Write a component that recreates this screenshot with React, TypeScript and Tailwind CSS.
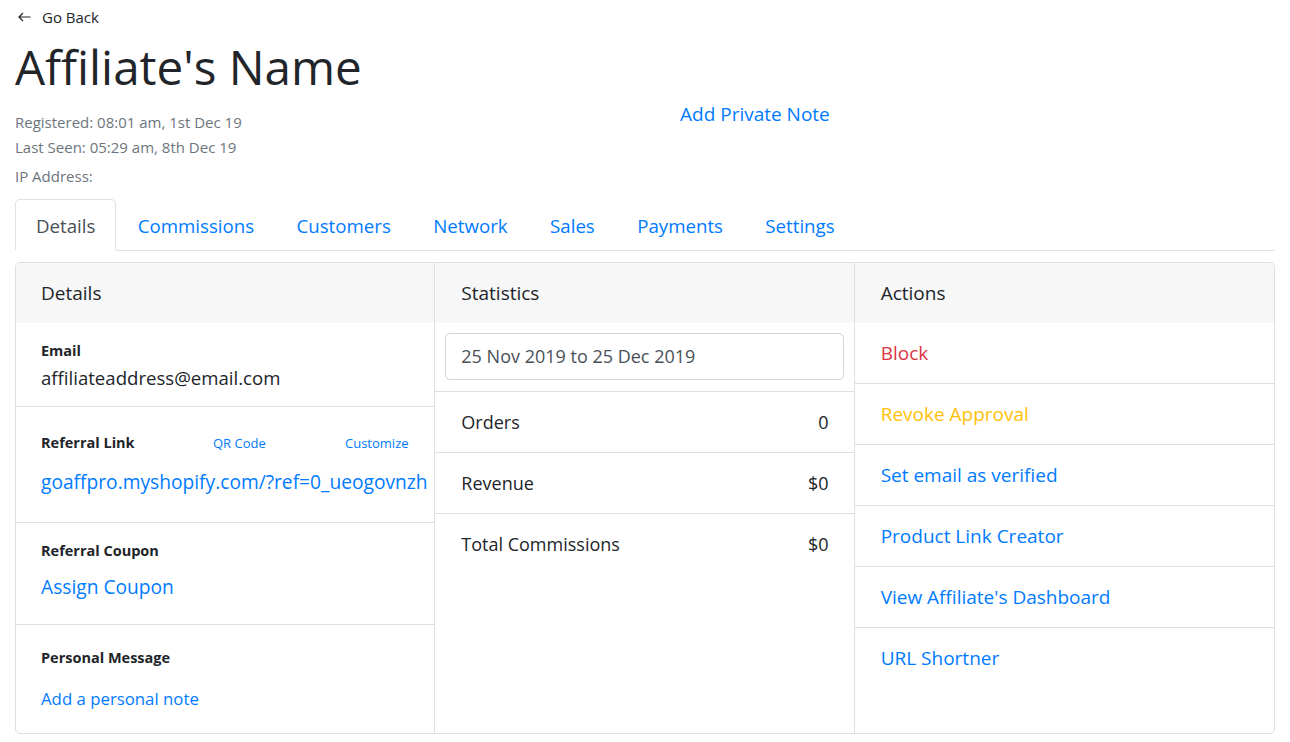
import React from "react";

const blue = "text-[#007bff]";

export default function App() {
  return (
    <div className="min-h-[742px] bg-white px-[15px] font-['Open_Sans',sans-serif] text-[#212529]">
      <div className="flex h-[34px] items-center pl-[3px] text-[15px]">
        <svg width="13" height="10" viewBox="0 0 13 10" className="mr-[11px]" fill="none" stroke="#212529" strokeWidth="1.2">
          <path d="M12.5 5H1M5 1 1 5l4 4" />
        </svg>
        <span>Go Back</span>
      </div>
      <h1 className="mt-[2px] h-[62px] text-[47.6px] leading-[62px] font-normal">Affiliate's Name</h1>
      <div className="flex">
        <div className="w-[665px] pt-[12px] text-[15px] text-[#6c757d]">
          <div className="h-[25px] leading-[25px]">Registered: 08:01 am, 1st Dec 19</div>
          <div className="h-[25px] leading-[25px]">Last Seen: 05:29 am, 8th Dec 19</div>
          <div className="mt-[4px] h-[25px] leading-[25px]">IP Address:</div>
        </div>
        <div className={`pt-[2px] text-[19px] ${blue}`}>Add Private Note</div>
      </div>
      <div className="mt-[10px] flex h-[52px] border-b border-[#dee2e6] text-[18.7px]">
        <div className="-mb-px flex h-[52px] items-center rounded-t-[5px] border border-b-white border-[#dee2e6] bg-white px-[20px] pt-[3px] text-[#495057]">
          Details
        </div>
        {["Commissions", "Customers", "Network", "Sales", "Payments", "Settings"].map((t) => (
          <div key={t} className={`flex items-center px-[21.2px] pt-[3px] ${blue}`}>
            {t}
          </div>
        ))}
      </div>
      <div className="mt-[11px] grid h-[472px] grid-cols-3 overflow-hidden rounded-[5px] border border-[#dfdfdf] text-[18px]">
        {/* Details */}
        <div className="flex flex-col border-r border-[#dfdfdf]">
          <div className="flex h-[60px] items-center bg-[#f7f7f7] px-[25px] text-[19px]">Details</div>
          <div className="h-[84px] border-b border-[#dfdfdf] px-[25px] pt-[18px]">
            <div className="text-[14.5px] font-bold leading-[20px]">Email</div>
            <div className="text-[18.6px] leading-[33px]">affiliateaddress@email.com</div>
          </div>
          <div className="h-[116px] border-b border-[#dfdfdf] px-[25px] pt-[26px]">
            <div className="flex items-center leading-[20px]">
              <div className="w-[172px] text-[14.5px] font-bold">Referral Link</div>
              <div className={`w-[132px] text-[13px] ${blue}`}>QR Code</div>
              <div className={`text-[13px] ${blue}`}>Customize</div>
            </div>
            <div className={`mt-[13px] whitespace-nowrap text-[19.2px] leading-[32px] ${blue}`}>
              goaffpro.myshopify.com/?ref=0_ueogovnzh
            </div>
          </div>
          <div className="h-[102px] border-b border-[#dfdfdf] px-[25px] pt-[18px]">
            <div className="text-[14.5px] font-bold leading-[20px]">Referral Coupon</div>
            <div className={`mt-[10px] text-[19.2px] leading-[32px] ${blue}`}>Assign Coupon</div>
          </div>
          <div className="flex-1 px-[25px] pt-[23px]">
            <div className="text-[14.5px] font-bold leading-[20px]">Personal Message</div>
            <div className={`mt-[16px] text-[16.8px] leading-[30px] ${blue}`}>Add a personal note</div>
          </div>
        </div>
        {/* Statistics */}
        <div className="flex flex-col border-r border-[#dfdfdf]">
          <div className="flex h-[60px] items-center bg-[#f7f7f7] px-[26px] text-[19px]">Statistics</div>
          <div className="h-[69px] border-b border-[#dfdfdf] px-[10px] pt-[10px]">
            <div className="flex h-[47px] items-center rounded-[5px] border border-[#ced4da] px-[15px] text-[18px] text-[#495057]">
              25 Nov 2019 to 25 Dec 2019
            </div>
          </div>
          {[
            ["Orders", "0"],
            ["Revenue", "$0"],
            ["Total Commissions", "$0"],
          ].map(([k, v], i) => (
            <div
              key={k}
              className={`flex h-[61px] items-center justify-between pl-[26px] pr-[25px] ${i < 2 ? "border-b border-[#dfdfdf]" : ""}`}
            >
              <span>{k}</span>
              <span>{v}</span>
            </div>
          ))}
        </div>
        {/* Actions */}
        <div className="flex flex-col">
          <div className="flex h-[60px] items-center bg-[#f7f7f7] px-[26px] text-[19px]">Actions</div>
          {[
            ["Block", "text-[#dc3545]"],
            ["Revoke Approval", "text-[#ffc107]"],
            ["Set email as verified", "text-[#007bff]"],
            ["Product Link Creator", "text-[#007bff]"],
            ["View Affiliate's Dashboard", "text-[#007bff]"],
            ["URL Shortner", "text-[#007bff]"],
          ].map(([t, c], i) => (
            <div
              key={t}
              className={`flex h-[61px] items-center px-[26px] text-[19px] ${c} ${i < 5 ? "border-b border-[#dfdfdf]" : ""}`}
            >
              {t}
            </div>
          ))}
        </div>
      </div>
    </div>
  );
}
